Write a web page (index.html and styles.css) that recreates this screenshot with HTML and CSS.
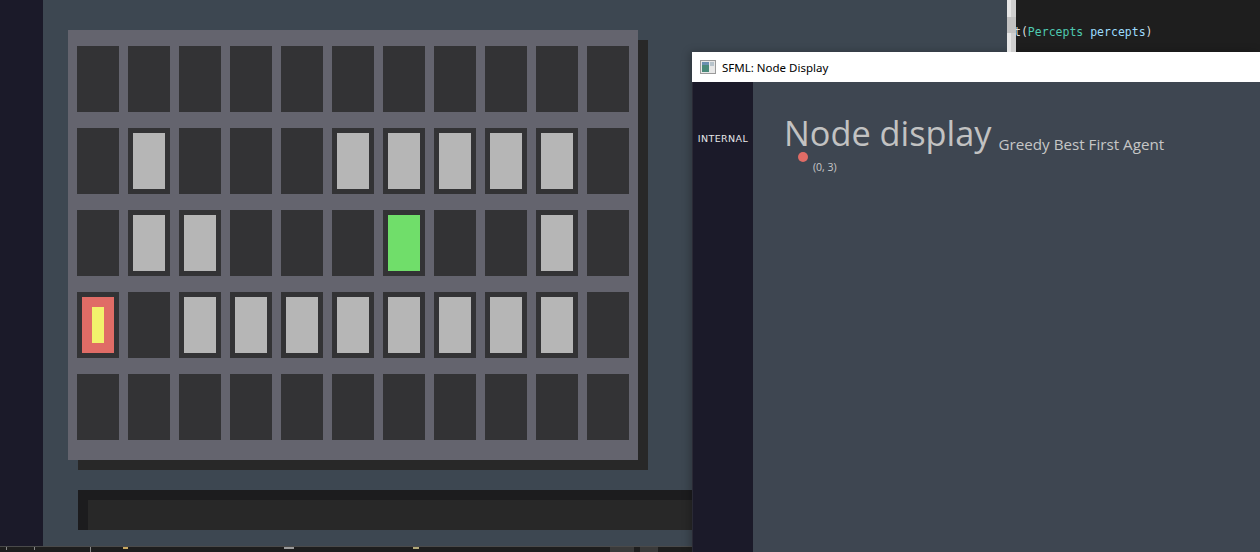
FILE: index.html
```html
<!DOCTYPE html>
<html>
<head>
<meta charset="utf-8">
<link rel="stylesheet" href="styles.css">
</head>
<body>
<div class="desktop">
  <div class="left-strip"></div>
  <main class="app">
    <div class="board">
      <div class="cell"></div><div class="cell"></div><div class="cell"></div><div class="cell"></div><div class="cell"></div><div class="cell"></div><div class="cell"></div><div class="cell"></div><div class="cell"></div><div class="cell"></div><div class="cell"></div>
      <div class="cell"></div><div class="cell"><div class="lamp"></div></div><div class="cell"></div><div class="cell"></div><div class="cell"></div><div class="cell"><div class="lamp"></div></div><div class="cell"><div class="lamp"></div></div><div class="cell"><div class="lamp"></div></div><div class="cell"><div class="lamp"></div></div><div class="cell"><div class="lamp"></div></div><div class="cell"></div>
      <div class="cell"></div><div class="cell"><div class="lamp"></div></div><div class="cell"><div class="lamp"></div></div><div class="cell"></div><div class="cell"></div><div class="cell"></div><div class="cell"><div class="lamp goal"></div></div><div class="cell"></div><div class="cell"></div><div class="cell"><div class="lamp"></div></div><div class="cell"></div>
      <div class="cell"><div class="lamp agent"><div class="core"></div></div></div><div class="cell"></div><div class="cell"><div class="lamp"></div></div><div class="cell"><div class="lamp"></div></div><div class="cell"><div class="lamp"></div></div><div class="cell"><div class="lamp"></div></div><div class="cell"><div class="lamp"></div></div><div class="cell"><div class="lamp"></div></div><div class="cell"><div class="lamp"></div></div><div class="cell"><div class="lamp"></div></div><div class="cell"></div>
      <div class="cell"></div><div class="cell"></div><div class="cell"></div><div class="cell"></div><div class="cell"></div><div class="cell"></div><div class="cell"></div><div class="cell"></div><div class="cell"></div><div class="cell"></div><div class="cell"></div>
    </div>
    <div class="console"><div class="console-inner"></div></div>
  </main>
  <footer class="taskbar">
    <span class="tick t1"></span><span class="tick t2"></span><span class="tick t3"></span>
    <span class="mark m1"></span><span class="mark m2"></span><span class="mark m3"></span>
    <span class="block b1"></span><span class="block b2"></span>
  </footer>

  <div class="editor">
    <div class="scrollbar"><div class="thumb"></div></div>
    <div class="code"><span class="p">t(</span><span class="type">Percepts</span> <span class="param">percepts</span><span class="p">)</span></div>
  </div>

  <section class="window">
    <header class="titlebar">
      <svg class="app-icon" width="16" height="14" viewBox="0 0 16 14">
        <rect x="0.5" y="0.5" width="15" height="13" fill="#e8e8e8" stroke="#9a9a9a"/>
        <rect x="2" y="2" width="7" height="10" fill="#4a8a7a"/>
        <rect x="2" y="2" width="7" height="3" fill="#6a8fb0"/>
        <rect x="10" y="2" width="4" height="4" fill="#b8c4cc"/>
      </svg>
      <span class="title">SFML: Node Display</span>
    </header>
    <div class="win-body">
      <aside class="sidebar"><span class="tab">INTERNAL</span></aside>
      <div class="canvas">
        <div class="heading">
          <h1>Node display</h1>
          <span class="subtitle">Greedy Best First Agent</span>
        </div>
        <div class="node"></div>
        <div class="node-label">(0, 3)</div>
      </div>
    </div>
  </section>
</div>
</body>
</html>
```

FILE: styles.css
```css
* { box-sizing: border-box; }
html, body { margin: 0; padding: 0; }
body {
  width: 1260px;
  height: 552px;
  overflow: hidden;
  font-family: "Open Sans", "Noto Sans", sans-serif;
}
.desktop {
  position: relative;
  width: 1260px;
  height: 552px;
  display: grid;
  grid-template-columns: 43px 1fr;
  grid-template-rows: 546px 6px;
  background: #3d4751;
  overflow: hidden;
}
.left-strip {
  background: #1b1a29;
}
.app {
  padding: 30px 0 0 25px;
  display: flex;
  flex-direction: column;
  align-items: flex-start;
}
.board {
  width: 570px;
  height: 430px;
  background: #64646e;
  box-shadow: 10px 10px 0 #282828;
  padding: 16px 9px 20px 9px;
  display: grid;
  grid-template-columns: repeat(11, 42px);
  grid-template-rows: repeat(5, 66px);
  column-gap: 9px;
  row-gap: 16px;
}
.cell {
  background: #333335;
  padding: 5px;
  display: flex;
}
.lamp {
  flex: 1;
  background: #b6b6b6;
}
.lamp.goal { background: #70de6a; }
.lamp.agent {
  background: #e06c66;
  padding: 10px;
  display: flex;
}
.core {
  flex: 1;
  background: #f2f26c;
}
.console {
  margin: 30px 0 0 10px;
  width: 700px;
  height: 40px;
  background: #1c1c1e;
  padding: 10px 0 0 10px;
}
.console-inner {
  height: 30px;
  background: #282828;
}
.taskbar {
  grid-column: 1 / 3;
  position: relative;
  background: #1e1e1e;
  border-top: 1px solid #4a4a4a;
}
.taskbar span { position: absolute; display: block; }
.tick { top: 0; width: 1px; height: 3px; background: #8a8a8a; }
.t1 { left: 6px; } .t2 { left: 34px; } .t3 { left: 90px; height: 5px; }
.mark { top: 0; height: 2px; width: 3px; background: #9a9a9a; }
.m1 { left: 123px; background: #c8a860; width: 5px; }
.m2 { left: 284px; width: 10px; }
.m3 { left: 413px; width: 6px; background: #b0a878; }
.block { top: 0; height: 5px; background: #3a3a3a; }
.b1 { left: 610px; width: 24px; }
.b2 { left: 640px; width: 18px; }

.editor {
  position: absolute;
  left: 1007px;
  top: 0;
  width: 253px;
  height: 52px;
  display: flex;
  background: #1e1e1e;
}
.scrollbar {
  width: 9px;
  background: linear-gradient(90deg, #e6e6e6 0 4px, #cfcfcf 4px);
  position: relative;
  z-index: 1;
}
.thumb {
  position: absolute;
  left: 0; right: 0;
  top: 17px; height: 16px;
  background: #c2c2c2;
}
.code {
  padding: 25px 0 0 0;
  font-family: "DejaVu Sans Mono", "Liberation Mono", monospace;
  font-size: 11.5px;
  line-height: 14px;
  color: #dcdcdc;
  white-space: pre;
  margin-left: -2px;
}
.code .type { color: #4ec9b0; }
.code .param { color: #9cdcfe; }

.window {
  position: absolute;
  left: 692px;
  top: 52px;
  width: 568px;
  height: 500px;
  display: flex;
  flex-direction: column;
  box-shadow: -2px 0 8px rgba(0,0,0,0.25);
}
.titlebar {
  height: 30px;
  background: #ffffff;
  display: flex;
  align-items: center;
  padding-left: 8px;
  gap: 6px;
}
.app-icon { display: block; }
.title {
  font-family: "Noto Sans", "Open Sans", sans-serif;
  font-size: 11.5px;
  color: #000;
}
.win-body {
  flex: 1;
  display: flex;
  background: #3e4651;
}
.sidebar {
  width: 61px;
  background: #1b1a29;
  border-left: 1px solid #2a2a35;
  display: flex;
  justify-content: center;
  padding-top: 50px;
}
.tab {
  font-family: "DejaVu Sans", sans-serif;
  font-size: 9.5px;
  letter-spacing: 0.4px;
  color: #e6e6ea;
  line-height: 14px;
}
.canvas {
  flex: 1;
  position: relative;
  padding: 31px 0 0 31px;
}
.heading {
  display: flex;
  align-items: flex-end;
  gap: 7px;
}
.heading h1 {
  margin: 0;
  font-family: "Open Sans", sans-serif;
  font-weight: 400;
  font-size: 34.3px;
  line-height: 40px;
  color: #c2c2c2;
}
.subtitle {
  font-family: "Open Sans", sans-serif;
  font-size: 15.2px;
  line-height: 17px;
  color: #c6c6c6;
}
.node {
  position: absolute;
  left: 45px;
  top: 70px;
  width: 10px;
  height: 10px;
  border-radius: 50%;
  background: #e06c66;
}
.node-label {
  position: absolute;
  left: 60px;
  top: 78px;
  font-family: "Open Sans", sans-serif;
  font-size: 10.5px;
  color: #c8c8c8;
}
```
